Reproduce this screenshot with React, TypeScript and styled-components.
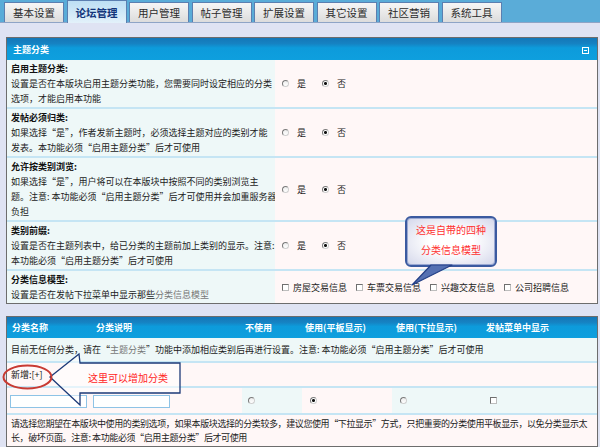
import React from 'react';
import styled, { createGlobalStyle } from 'styled-components';

const GlobalStyle = createGlobalStyle`
  html, body {
    margin: 0;
    padding: 0;
  }
  body {
    font-family: "Noto Sans CJK SC", "Noto Sans", sans-serif;
    font-size: 9px;
    color: #222;
  }
`;

const Page = styled.div`
  position: relative;
  width: 600px;
  height: 447px;
  overflow: hidden;
  background: #dfe3f3;
`;

const TabBar = styled.nav`
  height: 22px;
  background: #5aacd8;
  border-bottom: 1px solid #8ea4c6;
  display: flex;
  align-items: flex-end;
  gap: 2.5px;
  padding-left: 4px;
`;

const Tab = styled.div<{ $active?: boolean }>`
  width: 60px;
  height: ${p => (p.$active ? 23 : 20)}px;
  margin-bottom: ${p => (p.$active ? -1 : 0)}px;
  box-sizing: border-box;
  border: 1px solid #5b7fb0;
  border-bottom: none;
  background: ${p =>
    p.$active
      ? 'linear-gradient(#bddff4, #e3f1fa)'
      : 'linear-gradient(#f6f6f6, #dcdcdc)'};
  display: flex;
  align-items: center;
  justify-content: center;
  font-size: 10.5px;
  font-weight: ${p => (p.$active ? 'bold' : 'normal')};
  color: ${p => (p.$active ? '#12357a' : '#2a2a2a')};
`;

const Content = styled.main`
  padding: 14px 2px 0 6px;
  display: flex;
  flex-direction: column;
  gap: 12px;
`;

const Panel = styled.section`
  border: 1px solid #6d6d6d;
  background: #fff7f7;
`;

const headerBg = 'linear-gradient(#1477b8 0%, #1682c2 25%, #0d9bdb 45%, #0e9fde 100%)';

const PanelHeader = styled.header`
  height: 22px;
  box-sizing: border-box;
  background: ${headerBg};
  display: flex;
  align-items: center;
  justify-content: space-between;
  padding: 0 8px 0 6px;
  color: #fff;
  font-weight: bold;
`;

const CollapseIcon = styled.span`
  width: 7px;
  height: 7px;
  box-sizing: border-box;
  border: 1px solid #fff;
  display: flex;
  align-items: center;
  justify-content: center;
  margin-top: 2px;
  &::after {
    content: '';
    width: 3px;
    height: 1px;
    background: #fff;
  }
`;

const SettingRow = styled.div`
  display: grid;
  grid-template-columns: 268px 1fr;
  & + & {
    border-top: 2px solid #c5e5f4;
  }
`;

const SettingInfo = styled.div`
  background: #eef8f8;
  padding: 1px 4px;
  line-height: 15px;
  white-space: nowrap;
`;

const SettingTitle = styled.div`
  font-weight: bold;
  color: #111;
`;

const Muted = styled.span`
  color: #777;
`;

const SettingControl = styled.div`
  background: #fff7f7;
  display: flex;
  align-items: center;
  padding-left: 7px;
`;

const Option = styled.label`
  display: flex;
  align-items: center;
  gap: 8px;
  margin-right: 16px;
  line-height: 1;
`;

const CheckOption = styled.label`
  display: flex;
  align-items: center;
  gap: 4px;
  margin-right: 9px;
  line-height: 1;
`;

const Radio = styled.span<{ $checked?: boolean }>`
  display: inline-block;
  flex: none;
  width: 7px;
  height: 7px;
  box-sizing: border-box;
  border: 1px solid #7a7a7a;
  border-right-color: #cfcfcf;
  border-bottom-color: #cfcfcf;
  border-radius: 50%;
  background: ${p =>
    p.$checked
      ? 'radial-gradient(circle, #111 0 1.3px, #fff 1.6px)'
      : 'linear-gradient(#ececec, #fff)'};
`;

const Checkbox = styled.span`
  display: inline-block;
  flex: none;
  width: 7px;
  height: 7px;
  box-sizing: border-box;
  border: 1px solid #6f6f6f;
  border-right-color: #bdbdbd;
  border-bottom-color: #bdbdbd;
  background: #fff;
`;

const columns = '83px 152px 60px 90px 90px 1fr';

const TableHeader = styled.header`
  height: 21px;
  display: grid;
  grid-template-columns: ${columns};
  align-items: center;
  background: ${headerBg};
  color: #fff;
  font-weight: bold;
`;

const HeadCell = styled.div<{ $inset: number }>`
  padding-left: ${p => p.$inset}px;
  white-space: nowrap;
`;

const LineRow = styled.div<{ $tone: 'cyan' | 'pink' }>`
  height: 23px;
  display: flex;
  align-items: center;
  padding-left: 4px;
  white-space: nowrap;
  background: ${p => (p.$tone === 'cyan' ? '#eef8f8' : '#fff7f7')};
  & + & {
    border-top: 2px solid #c5e5f4;
  }
`;

const GridRow = styled.div`
  height: 25px;
  display: grid;
  grid-template-columns: ${columns};
  border-top: 2px solid #c5e5f4;
`;

const Cell = styled.div<{ $tone: 'cyan' | 'pink'; $inset: number }>`
  display: flex;
  align-items: center;
  padding-left: ${p => p.$inset}px;
  background: ${p => (p.$tone === 'cyan' ? '#eef8f8' : '#fff7f7')};
`;

const TextInput = styled.input`
  width: 77px;
  height: 13px;
  box-sizing: border-box;
  border: 1px solid #8ec3e6;
  background: #fff;
  padding: 0;
  margin: 2px 0 0;
`;

const NoteRow = styled.div`
  border-top: 2px solid #c5e5f4;
  padding: 2px 3px 1px 4px;
  line-height: 14px;
  letter-spacing: -0.4px;
  white-space: nowrap;
  background: #fff7f7;
`;

const AddLink = styled.span`
  color: #111;
`;

const Bubble = styled.div`
  position: absolute;
  left: 405px;
  top: 216px;
  width: 92px;
  height: 51px;
  box-sizing: border-box;
  border: 2px solid #3b5aa0;
  border-radius: 6px;
  background: radial-gradient(ellipse at center, #ffffff 35%, #d3d6ea 100%);
  box-shadow: inset 0 0 0 1px #9aa8d2;
  padding-top: 2px;
  color: #ff3030;
  font-size: 10px;
  line-height: 20px;
  text-align: center;
`;

const Overlay = styled.svg`
  position: absolute;
  overflow: visible;
  pointer-events: none;
`;

const ArrowNote = styled.span`
  position: absolute;
  left: 88px;
  top: 371px;
  color: #ff2424;
  font-size: 10px;
  line-height: 14px;
  white-space: nowrap;
`;

type Setting = {
  title: string;
  lines: React.ReactNode[];
};

const settings: Setting[] = [
  {
    title: '启用主题分类:',
    lines: ['设置是否在本版块启用主题分类功能，您需要同时设定相应的分类', '选项，才能启用本功能'],
  },
  {
    title: '发帖必须归类:',
    lines: ['如果选择“是”，作者发新主题时，必须选择主题对应的类别才能', '发表。本功能必须“启用主题分类”后才可使用'],
  },
  {
    title: '允许按类别浏览:',
    lines: [
      '如果选择“是”，用户将可以在本版块中按照不同的类别浏览主',
      '题。注意: 本功能必须“启用主题分类”后才可使用并会加重服务器',
      '负担',
    ],
  },
  {
    title: '类别前缀:',
    lines: ['设置是否在主题列表中，给已分类的主题前加上类别的显示。注意:', '本功能必须“启用主题分类”后才可使用'],
  },
];

const models = ['房屋交易信息', '车票交易信息', '兴趣交友信息', '公司招聘信息'];

const YesNo: React.FC = () => (
  <SettingControl>
    <Option>
      <Radio />是
    </Option>
    <Option>
      <Radio $checked />否
    </Option>
  </SettingControl>
);

const App: React.FC = () => {
  const tabs = ['基本设置', '论坛管理', '用户管理', '帖子管理', '扩展设置', '其它设置', '社区营销', '系统工具'];

  return (
    <Page>
      <GlobalStyle />
      <TabBar>
        {tabs.map(t => (
          <Tab key={t} $active={t === '论坛管理'}>
            {t}
          </Tab>
        ))}
      </TabBar>

      <Content>
        <Panel>
          <PanelHeader>
            主题分类
            <CollapseIcon />
          </PanelHeader>
          {settings.map(s => (
            <SettingRow key={s.title}>
              <SettingInfo>
                <SettingTitle>{s.title}</SettingTitle>
                {s.lines.map((l, i) => (
                  <div key={i}>{l}</div>
                ))}
              </SettingInfo>
              <YesNo />
            </SettingRow>
          ))}
          <SettingRow>
            <SettingInfo>
              <SettingTitle>分类信息模型:</SettingTitle>
              <div>
                设置是否在发帖下拉菜单中显示那些<Muted>分类信息模型</Muted>
              </div>
            </SettingInfo>
            <SettingControl>
              {models.map(m => (
                <CheckOption key={m}>
                  <Checkbox />
                  {m}
                </CheckOption>
              ))}
            </SettingControl>
          </SettingRow>
        </Panel>

        <Panel>
          <TableHeader>
            <HeadCell $inset={5}>分类名称</HeadCell>
            <HeadCell $inset={6}>分类说明</HeadCell>
            <HeadCell $inset={3}>不使用</HeadCell>
            <HeadCell $inset={3}>使用(平板显示)</HeadCell>
            <HeadCell $inset={4}>使用(下拉显示)</HeadCell>
            <HeadCell $inset={4}>发帖菜单中显示</HeadCell>
          </TableHeader>
          <LineRow $tone="cyan">
            目前无任何分类，请在“<Muted>主题分类</Muted>”功能中添加相应类别后再进行设置。注意: 本功能必须“启用主题分类”后才可使用
          </LineRow>
          <LineRow $tone="pink">
            <AddLink>新增:[+]</AddLink>
          </LineRow>
          <GridRow>
            <Cell $tone="pink" $inset={3}>
              <TextInput />
            </Cell>
            <Cell $tone="pink" $inset={3}>
              <TextInput />
            </Cell>
            <Cell $tone="cyan" $inset={6}>
              <Radio />
            </Cell>
            <Cell $tone="pink" $inset={8}>
              <Radio $checked />
            </Cell>
            <Cell $tone="cyan" $inset={8}>
              <Radio />
            </Cell>
            <Cell $tone="cyan" $inset={8}>
              <Checkbox />
            </Cell>
          </GridRow>
          <NoteRow>
            <div>
              请选择您期望在本版块中使用的类别选项，如果本版块选择的分类较多，建议您使用“下拉显示”方式，只把重要的分类使用平板显示，以免分类显示太
            </div>
            <div>长，破坏页面。注意: 本功能必须“启用主题分类”后才可使用</div>
          </NoteRow>
        </Panel>
      </Content>

      {/* annotation: built-in models */}
      <Bubble>
        这是自带的四种
        <br />
        分类信息模型
      </Bubble>
      <Overlay style={{ left: 405, top: 260 }} width="50" height="28" viewBox="0 0 50 28">
        <polygon points="26,5 47,5 7,25" fill="#5470b2" stroke="#233f86" strokeWidth="1.2" strokeLinejoin="round" />
      </Overlay>

      {/* annotation: add category */}
      <Overlay style={{ left: 0, top: 340 }} width="200" height="80" viewBox="0 0 200 80">
        <polygon
          points="50,37 79,14 80,23 180,23 180,53 80,53 80,65"
          fill="rgba(255,255,255,0.55)"
          stroke="#1d3a78"
          strokeWidth="1.3"
        />
        <ellipse cx="27.5" cy="37" rx="24" ry="11.5" fill="none" stroke="#c83a32" strokeWidth="2" />
      </Overlay>
      <ArrowNote>这里可以增加分类</ArrowNote>
    </Page>
  );
};

export default App;
